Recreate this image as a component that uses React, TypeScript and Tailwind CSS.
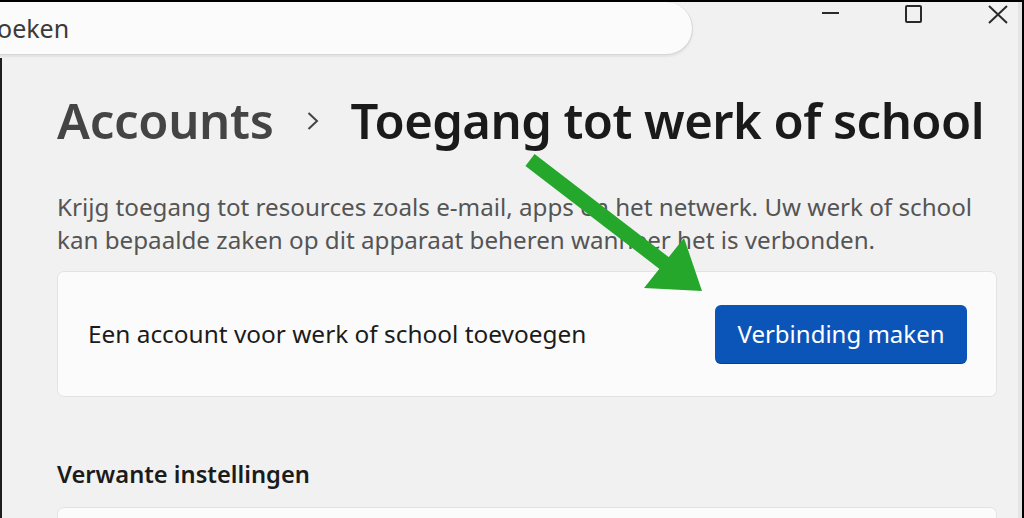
import React from "react";

export default function App() {
  const font = { fontFamily: '"Noto Sans", "Open Sans", Arial, sans-serif' };
  return (
    <div
      className="relative w-[1024px] h-[518px] overflow-hidden bg-black pt-[2px] pb-[2px] pr-[2px] flex flex-col"
      style={font}
    >
      <div className="flex-1 flex flex-col bg-[#f1f1f1] border-r-[4px] border-[#e4e4e4]">
        {/* top bar */}
        <div className="flex h-[56px] shrink-0">
          <div className="w-[693px] h-[53px] bg-[#fbfbfb] rounded-r-[27px] border-b border-r border-[#d6d6d6] shadow-[0_2px_2px_rgba(0,0,0,0.06)] flex items-center">
            <span className="text-[25px] text-[#3a3a3a] -ml-[3px] leading-none">oeken</span>
          </div>
          <div className="flex-1 flex items-start justify-end">
            <div className="w-[40px] h-[20px] flex items-center justify-center">
              <div className="w-[17px] h-[2px] bg-[#2a2a2a] mt-[2px]" />
            </div>
            <div className="ml-[43px] w-[40px] h-[22px] flex items-start justify-center">
              <div className="w-[17px] h-[18px] border-2 border-[#2a2a2a] rounded-[2px] mt-[3px]" />
            </div>
            <div className="ml-[45px] w-[40px] h-[22px] flex items-start justify-center">
              <svg className="mt-[3px]" width="22" height="19" viewBox="0 0 22 19">
                <path d="M2 1 L20 18 M20 1 L2 18" stroke="#2a2a2a" strokeWidth="2" fill="none" />
              </svg>
            </div>
          </div>
        </div>

        {/* content */}
        <div className="flex-1 flex flex-col border-l-[2px] border-[#1e1e1e] pl-[55px] pr-[21px]">
          <div className="flex items-center mt-[28px] h-[70px]">
            <span className="text-[49px] font-semibold text-[#444444] tracking-[-0.3px]">Accounts</span>
            <svg className="ml-[32px] mr-[31px]" width="14" height="20" viewBox="0 0 14 20">
              <path d="M2.5 2 L11 10 L2.5 18" stroke="#444" strokeWidth="2" fill="none" />
            </svg>
            <span className="text-[49px] font-semibold text-[#1a1a1a] tracking-[-0.55px]">Toegang tot werk of school</span>
          </div>

          <p className="mt-[34px] text-[24.2px] leading-[33px] text-[#555555] whitespace-nowrap">
            Krijg toegang tot resources zoals e-mail, apps en het netwerk. Uw werk of school
            <br />
            kan bepaalde zaken op dit apparaat beheren wanneer het is verbonden.
          </p>

          <div className="mt-[15px] h-[126px] bg-[#fbfbfb] border border-[#e3e3e3] rounded-[7px] flex items-center justify-between pl-[30px] pr-[29px]">
            <span className="text-[24.4px] text-[#1b1b1b]">Een account voor werk of school toevoegen</span>
            <button className="w-[252px] h-[59px] bg-[#0c55b8] rounded-[6px] border-b border-[#083f8c] text-white text-[24px] flex items-center justify-center">
              Verbinding maken
            </button>
          </div>

          <h2 className="mt-[62px] text-[23.7px] font-semibold text-[#1b1b1b] leading-[30px]">Verwante instellingen</h2>

          <div className="mt-[18px] h-[40px] bg-[#fbfbfb] border border-[#e3e3e3] rounded-[7px]" />
        </div>
      </div>

      {/* green annotation arrow */}
      <svg className="absolute left-0 top-0 pointer-events-none" width="1024" height="518" viewBox="0 0 1024 518">
        <line x1="530" y1="160" x2="668" y2="266" stroke="#25a72b" strokeWidth="15" />
        <polygon points="644,288 702,291 684,238" fill="#25a72b" />
      </svg>
    </div>
  );
}
